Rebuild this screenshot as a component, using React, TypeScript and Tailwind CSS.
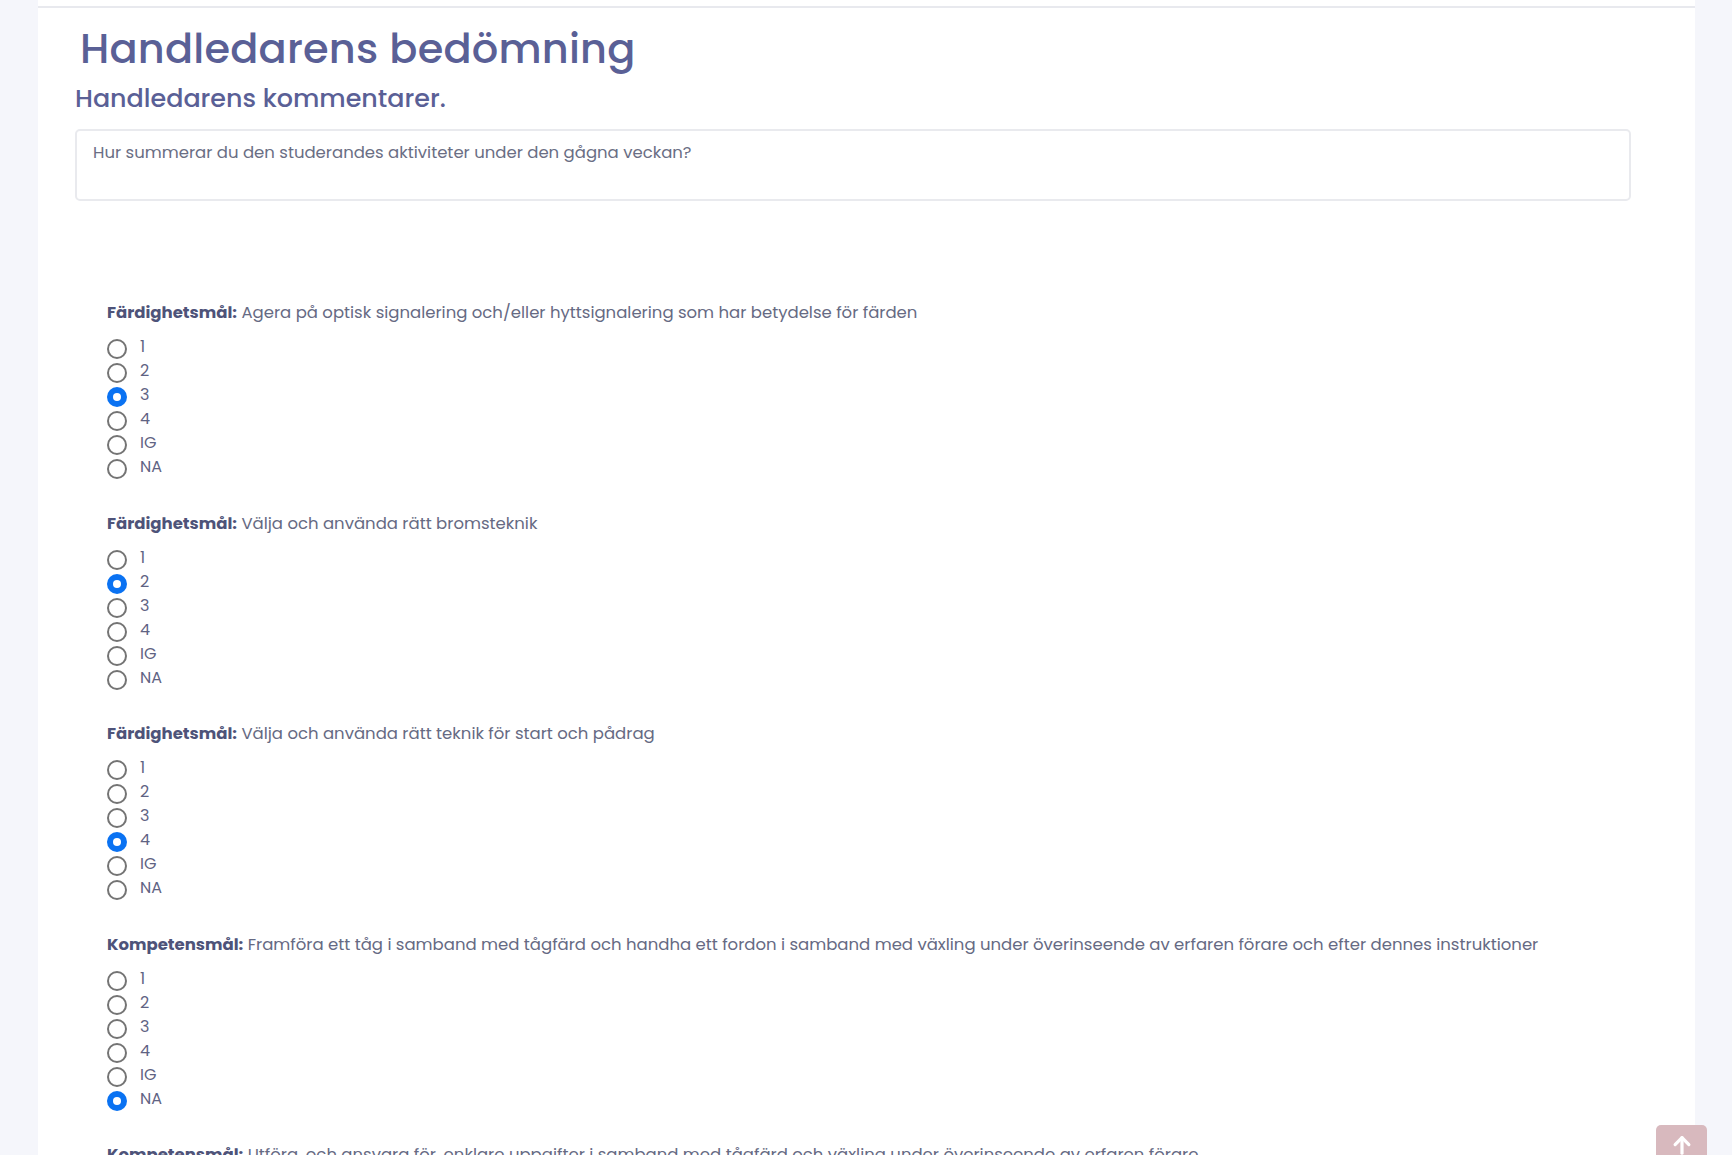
import React from 'react';

interface Goal {
  kind: string;
  text: string;
  selected: string | null;
}

const options = ['1', '2', '3', '4', 'IG', 'NA'];

const goals: Goal[] = [
  {
    kind: 'Färdighetsmål:',
    text: 'Agera på optisk signalering och/eller hyttsignalering som har betydelse för färden',
    selected: '3',
  },
  { kind: 'Färdighetsmål:', text: 'Välja och använda rätt bromsteknik', selected: '2' },
  { kind: 'Färdighetsmål:', text: 'Välja och använda rätt teknik för start och pådrag', selected: '4' },
  {
    kind: 'Kompetensmål:',
    text: 'Framföra ett tåg i samband med tågfärd och handha ett fordon i samband med växling under överinseende av erfaren förare och efter dennes instruktioner',
    selected: 'NA',
  },
  {
    kind: 'Kompetensmål:',
    text: 'Utföra, och ansvara för, enklare uppgifter i samband med tågfärd och växling under överinseende av erfaren förare',
    selected: null,
  },
];

const Radio: React.FC<{ checked: boolean }> = ({ checked }) =>
  checked ? (
    <span className="flex items-center justify-center w-[20px] h-[20px] rounded-full bg-[#0a72f2]">
      <span className="w-[8px] h-[8px] rounded-full bg-white" />
    </span>
  ) : (
    <span className="block w-[20px] h-[20px] rounded-full border-2 border-[#747474] bg-white" />
  );

const App: React.FC = () => {
  return (
    <div
      className="h-screen bg-[#f5f6fb] px-[38px] pr-[37px] overflow-hidden"
      style={{ fontFamily: 'Poppins, Inter, "Noto Sans", sans-serif' }}
    >
      <div className="bg-white h-full">
        <div className="h-[6px]" />
        <div className="border-t-2 border-[#e8e9ee]" />

        <h1 className="pl-[42px] mt-[13px] text-[41.5px] leading-[56px] font-medium text-[#5a6096] tracking-[0.2px]">
          Handledarens bedömning
        </h1>
        <h2 className="pl-[37px] mt-[4px] text-[25.4px] leading-[34px] font-medium text-[#5a6096]">
          Handledarens kommentarer.
        </h2>

        <div className="ml-[37px] mt-[14px] w-[1556px] h-[72px] border-2 border-[#e9eaee] rounded-[5px] px-[16px] pt-[10px] text-[16.5px] leading-[24px] text-[#6a6e84]">
          Hur summerar du den studerandes aktiviteter under den gågna veckan?
        </div>

        <div className="pl-[69px] pt-[100px]">
          {goals.map((g, i) => (
            <div key={i} className="mb-[30.5px]">
              <p className="text-[16.5px] leading-[24px] text-[#666a83]">
                <span className="font-bold text-[#4e5379]">{g.kind}</span> {g.text}
              </p>
              <div className="mt-[12px] flex flex-col">
                {options.map(o => (
                  <label key={o} className="flex items-center h-[24px]">
                    <Radio checked={g.selected === o} />
                    <span className="ml-[13px] -mt-[4px] text-[16px] leading-[20px] text-[#5f6383]">{o}</span>
                  </label>
                ))}
              </div>
            </div>
          ))}
        </div>
      </div>

      <button className="fixed left-[1656px] top-[1125px] w-[51px] h-[56px] rounded-[5px] bg-[#d8b9be] flex justify-center pt-[9px]">
        <svg width="22" height="22" viewBox="0 0 24 24" fill="none" stroke="white" strokeWidth="3.5" strokeLinecap="round" strokeLinejoin="round">
          <path d="M12 21V4" />
          <path d="M4.5 11.5L12 4l7.5 7.5" />
        </svg>
      </button>
    </div>
  );
};

export default App;
